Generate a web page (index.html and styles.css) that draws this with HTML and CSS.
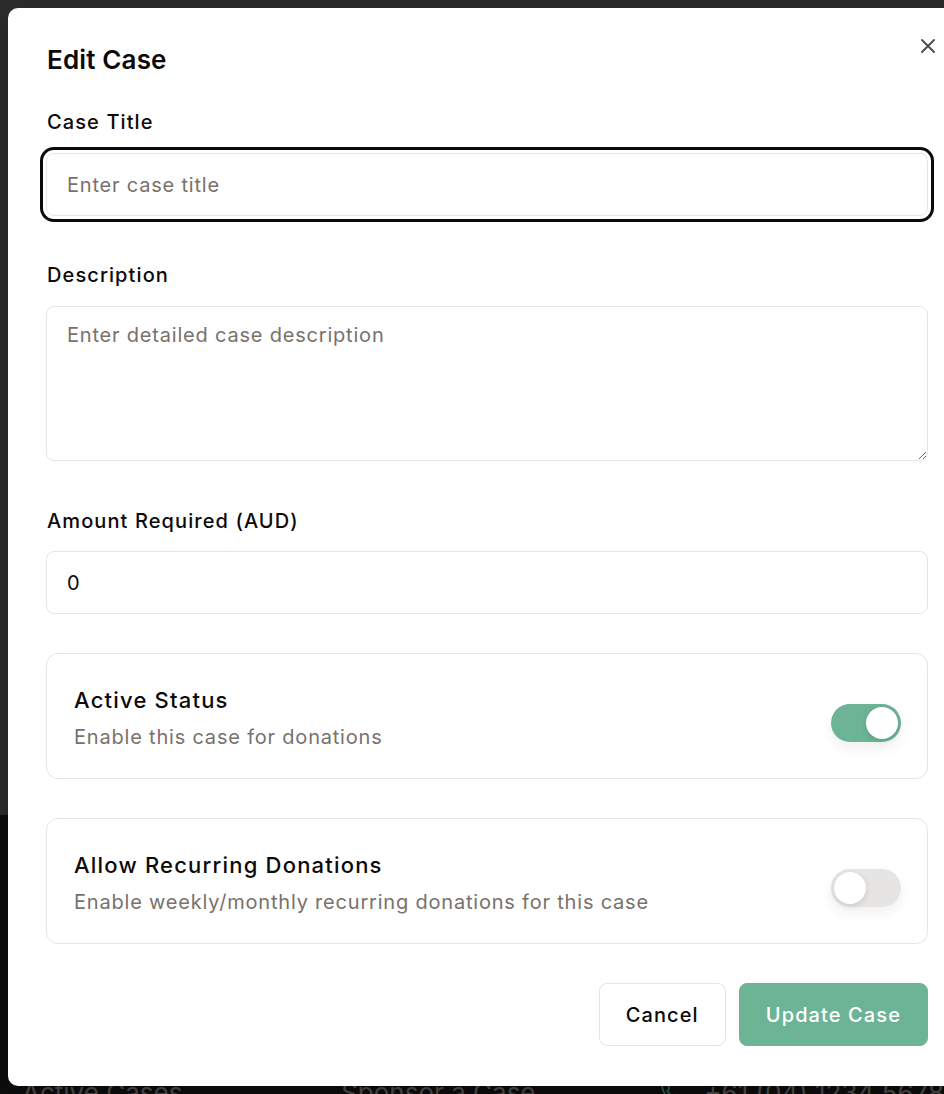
FILE: index.html
```html
<!DOCTYPE html>
<html lang="en">
<head>
<meta charset="utf-8">
<title>Edit Case</title>
<link rel="stylesheet" href="styles.css">
</head>
<body>
<div class="page">
  <div class="page-main"></div>
  <footer class="page-footer">
    <span class="footer-link">Active Cases</span>
    <span class="footer-link footer-link--mid">Sponsor a Case</span>
    <span class="footer-phone">
      <svg width="22" height="22" viewBox="0 0 24 24" fill="none" stroke="#2f5e4c" stroke-width="2" stroke-linecap="round" stroke-linejoin="round"><path d="M22 16.9v3a2 2 0 0 1-2.2 2 19.8 19.8 0 0 1-8.6-3.1 19.5 19.5 0 0 1-6-6A19.8 19.8 0 0 1 2.1 4.2 2 2 0 0 1 4.1 2h3a2 2 0 0 1 2 1.7c.1.9.4 1.8.7 2.7a2 2 0 0 1-.5 2.1L8 9.8a16 16 0 0 0 6 6l1.3-1.3a2 2 0 0 1 2.1-.4c.9.3 1.8.6 2.7.7a2 2 0 0 1 1.7 2z"/></svg>
      <span>+61 (04) 1234 5678</span>
    </span>
  </footer>
</div>

<div class="modal" role="dialog" aria-labelledby="dlg-title">
  <button class="close-btn" aria-label="Close">
    <svg width="16" height="16" viewBox="0 0 16 16" fill="none" stroke="#4a4a4a" stroke-width="1.8" stroke-linecap="round"><path d="M2 2 L14 14 M14 2 L2 14"/></svg>
  </button>
  <h2 class="modal-title" id="dlg-title">Edit Case</h2>

  <form class="form">
    <div class="field field--first">
      <label class="label" for="title">Case Title</label>
      <input class="input is-focused" id="title" type="text" placeholder="Enter case title">
    </div>

    <div class="field field--desc">
      <label class="label" for="desc">Description</label>
      <textarea class="textarea" id="desc" placeholder="Enter detailed case description"></textarea>
    </div>

    <div class="field field--amount">
      <label class="label" for="amount">Amount Required (AUD)</label>
      <input class="input input--amount" id="amount" type="text" value="0">
    </div>

    <div class="card">
      <div class="card-text">
        <div class="card-title">Active Status</div>
        <div class="card-sub">Enable this case for donations</div>
      </div>
      <span class="switch switch--on"><span class="knob"></span></span>
    </div>

    <div class="card">
      <div class="card-text">
        <div class="card-title">Allow Recurring Donations</div>
        <div class="card-sub">Enable weekly/monthly recurring donations for this case</div>
      </div>
      <span class="switch"><span class="knob"></span></span>
    </div>

    <div class="actions">
      <button type="button" class="btn btn--outline">Cancel</button>
      <button type="button" class="btn btn--primary">Update Case</button>
    </div>
  </form>
</div>
</body>
</html>
```

FILE: styles.css
```css
* { box-sizing: border-box; }

html, body {
  margin: 0;
  padding: 0;
  width: 944px;
  height: 1094px;
  overflow: hidden;
}

body {
  font-family: Inter, "Noto Sans", "Liberation Sans", sans-serif;
  background: #0d0d0d;
  position: relative;
  color: #0c0a09;
}

.page {
  display: flex;
  flex-direction: column;
  height: 1094px;
}

.page-main {
  height: 815px;
  background: #2c2c2c;
}

.page-footer {
  flex: 1;
  background: #0d0d0d;
  display: flex;
  align-items: flex-end;
  padding: 0 0 0 22px;
  color: #4d4d4d;
  font-size: 26px;
  line-height: 1;
  margin-bottom: -12px;
}

.footer-link { width: 330px; }
.footer-link--mid { width: 330px; }

.footer-phone {
  display: flex;
  align-items: center;
  gap: 22px;
  white-space: nowrap;
}

.modal {
  position: absolute;
  left: 8px;
  top: 8px;
  width: 958px;
  background: #ffffff;
  border-radius: 10px;
  padding: 36px 38px 40px 38px;
  box-shadow: 0 10px 30px rgba(0,0,0,0.25);
}

.close-btn {
  position: absolute;
  top: 30px;
  right: 30px;
  width: 16px;
  height: 16px;
  padding: 0;
  border: 0;
  background: none;
  display: flex;
}

.modal-title {
  margin: 0;
  font-size: 26px;
  line-height: 32px;
  font-weight: 600;
  letter-spacing: 0.15px;
  padding-left: 1px;
}

.form {
  display: flex;
  flex-direction: column;
}

.field {
  display: flex;
  flex-direction: column;
}

.field--first { margin-top: 32px; }
.field--desc { margin-top: 45px; }
.field--amount { margin-top: 46px; }

.label {
  font-size: 20px;
  line-height: 28px;
  font-weight: 450;
  letter-spacing: 1.1px;
  padding-left: 1px;
  margin-bottom: 17px;
}

.field--amount .label { margin-bottom: 16px; }

.input,
.textarea {
  width: 100%;
  font-family: inherit;
  font-size: 20px;
  letter-spacing: 0.8px;
  color: #0c0a09;
  border: 1px solid #e7e5e4;
  border-radius: 8px;
  background: #fff;
  padding: 0 20px;
  margin: 0;
}

.input { height: 63px; }

.input::placeholder,
.textarea::placeholder { color: #78716c; opacity: 1; }

.is-focused {
  outline: 3px solid #0c0a09;
  outline-offset: 3px;
}

.textarea {
  height: 155px;
  padding-top: 14px;
  line-height: 28px;
  resize: vertical;
  display: block;
}

.card {
  margin-top: 39px;
  border: 1px solid #e7e5e4;
  border-radius: 12px;
  padding: 31px 26px 27px 27px;
  display: flex;
  align-items: center;
  justify-content: space-between;
}

.card-text {
  display: flex;
  flex-direction: column;
  gap: 8px;
}

.card-title {
  font-size: 22px;
  line-height: 30px;
  font-weight: 450;
  letter-spacing: 1.2px;
}

.card-sub {
  font-size: 20px;
  line-height: 28px;
  letter-spacing: 0.8px;
  color: #78716c;
}

.switch {
  position: relative;
  width: 70px;
  height: 38px;
  border-radius: 19px;
  background: #e7e5e4;
  flex: 0 0 auto;
  margin-top: 10px;
  box-shadow: 0 6px 14px rgba(0,0,0,0.06);
}

.switch--on { background: #6db396; }

.knob {
  position: absolute;
  top: 3px;
  left: 3px;
  width: 32px;
  height: 32px;
  border-radius: 50%;
  background: #ffffff;
  box-shadow: 0 2px 6px rgba(0,0,0,0.12);
}

.switch--on .knob { left: 35px; }

.actions {
  margin-top: 39px;
  display: flex;
  justify-content: flex-end;
  gap: 13px;
}

.btn {
  height: 63px;
  font-family: inherit;
  font-size: 20px;
  font-weight: 450;
  letter-spacing: 1.1px;
  border-radius: 8px;
  cursor: pointer;
}

.btn--outline {
  background: #fff;
  color: #0c0a09;
  border: 1px solid #e7e5e4;
  padding: 0 26px;
}

.btn--primary {
  background: #6db396;
  color: #ffffff;
  border: 1px solid #6db396;
  padding: 0 26px;
}
```
